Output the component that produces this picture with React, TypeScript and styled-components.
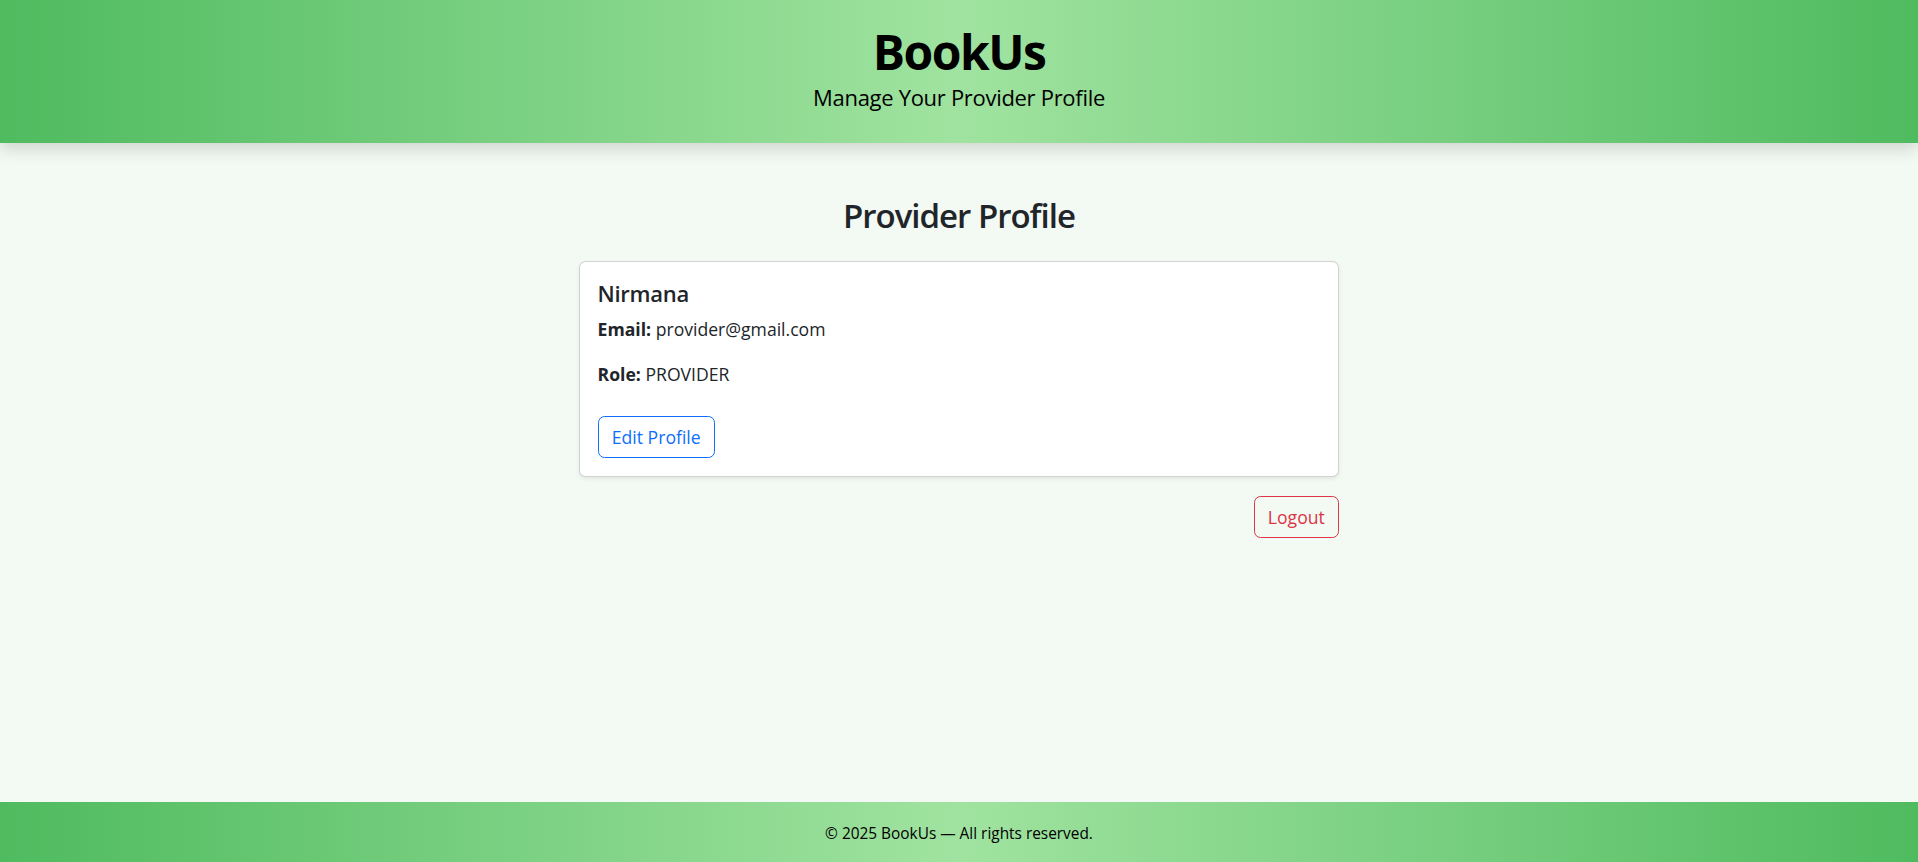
import styled, { createGlobalStyle } from "styled-components";

const GlobalStyle = createGlobalStyle`
    html, body {
        margin: 0;
        padding: 0;
    }
    body {
        font-family: "Open Sans", "Noto Sans", "Liberation Sans", sans-serif;
        font-size: 17.6px;
        line-height: 1.5;
        color: #212529;
        background-color: #f3f9f3;
    }
    * {
        box-sizing: border-box;
    }
`

const Page = styled.div`
    min-height: 100vh;
    display: flex;
    flex-direction: column;
`

const Header = styled.header`
    background: linear-gradient(90deg, #4fbb5f 0%, #a0e3a0 50%, #4fbb5f 100%);
    box-shadow: 0 6px 16px rgba(0, 0, 0, 0.15);
    text-align: center;
    padding: 23px 0 29px;
    color: #000;
    position: relative;
    z-index: 1;
`

const Brand = styled.h1`
    font-size: 48px;
    font-weight: 700;
    letter-spacing: -1.5px;
    line-height: 1.2;
    margin: 0;
`

const Tagline = styled.p`
    font-size: 22px;
    letter-spacing: -0.3px;
    line-height: 1.5;
    margin: 0;
`

const Main = styled.main`
    flex: 1;
    width: 760px;
    margin: 0 auto;
    padding-top: 53px;
`

const Title = styled.h2`
    font-size: 33px;
    font-weight: 600;
    letter-spacing: -1px;
    line-height: 1.2;
    text-align: center;
    margin: 0 0 26px;
`

const Card = styled.div`
    background: #fff;
    border: 1px solid rgba(0, 0, 0, 0.175);
    border-radius: 6.6px;
    box-shadow: 0 2px 4px rgba(0, 0, 0, 0.075);
    padding: 17.6px 17.6px 18.6px;
`

const Name = styled.h5`
    font-size: 22px;
    font-weight: 600;
    letter-spacing: -0.3px;
    line-height: 1.2;
    margin: 0 0 10px;
`

const Field = styled.p`
    margin: 0 0 18.6px;
`

type ButtonProps = {
    $tone: string
}

const OutlineButton = styled.button<ButtonProps>`
    font-family: inherit;
    font-size: 17.6px;
    line-height: 1.5;
    padding: 6.6px 13.2px;
    border-radius: 6.6px;
    background: transparent;
    border: 1px solid ${props => props.$tone};
    color: ${props => props.$tone};
    cursor: pointer;
`

const EditButton = styled(OutlineButton)`
    margin-top: 10px;
`

const Actions = styled.div`
    display: flex;
    justify-content: flex-end;
    margin-top: 19px;
`

const Footer = styled.footer`
    background: linear-gradient(90deg, #4fbb5f 0%, #a0e3a0 50%, #4fbb5f 100%);
    height: 60px;
    display: flex;
    align-items: center;
    justify-content: center;
    padding-top: 4px;
    font-size: 15.4px;
    color: #000;
`

const App = () => {
    return (
        <Page>
            <GlobalStyle />
            <Header>
                <Brand>BookUs</Brand>
                <Tagline>Manage Your Provider Profile</Tagline>
            </Header>
            <Main>
                <Title>Provider Profile</Title>
                <Card>
                    <Name>Nirmana</Name>
                    <Field><strong>Email:</strong> provider@gmail.com</Field>
                    <Field><strong>Role:</strong> PROVIDER</Field>
                    <EditButton $tone="#0d6efd">Edit Profile</EditButton>
                </Card>
                <Actions>
                    <OutlineButton $tone="#dc3545">Logout</OutlineButton>
                </Actions>
            </Main>
            <Footer>© 2025 BookUs — All rights reserved.</Footer>
        </Page>
    )
}

export default App;
